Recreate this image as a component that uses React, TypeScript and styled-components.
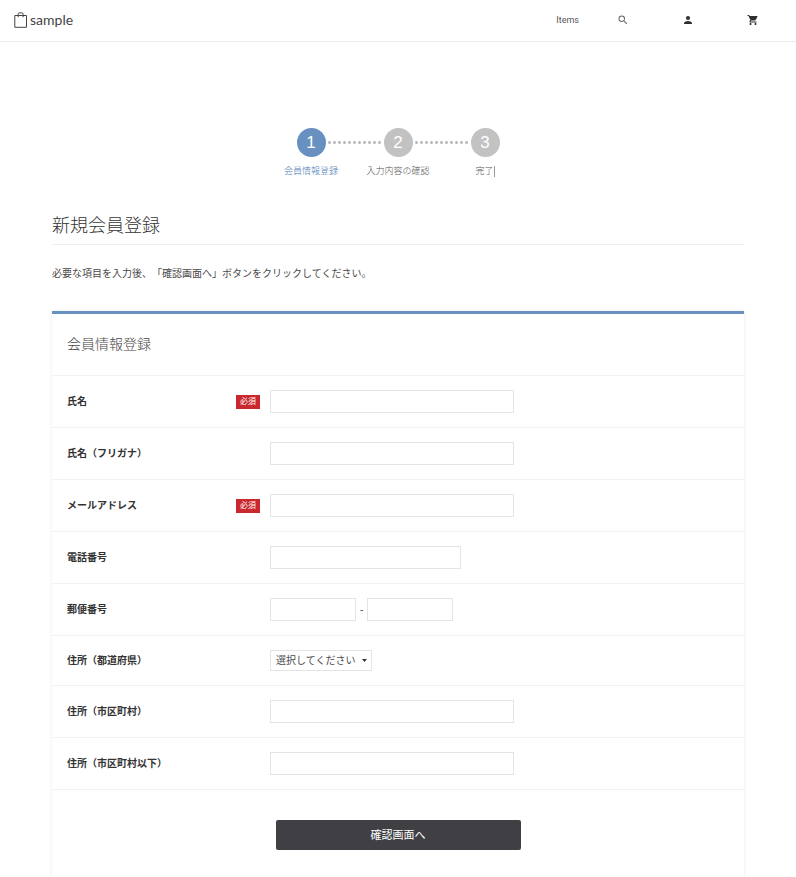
import React from "react";
import styled, { createGlobalStyle } from "styled-components";
import { MdPerson, MdSearch, MdShoppingCart } from "react-icons/md";

const GlobalStyle = createGlobalStyle`
  *, *::before, *::after { box-sizing: border-box; }
  body {
    margin: 0;
    background: #fff;
    color: #4a4a4a;
    font-family: "Liberation Sans", "Noto Sans CJK JP", sans-serif;
    font-size: 10px;
    line-height: 16px;
    text-spacing-trim: space-all;
  }
  #root { overflow: hidden; }
  button, input, select { font: inherit; color: inherit; }
`;

const Header = styled.header`
  display: flex;
  justify-content: space-between;
  align-items: center;
  height: 42px;
  padding: 0 35px 2px 14px;
  border-bottom: 1px solid #ebebeb;
`;

const Logo = styled.a`
  display: flex;
  align-items: center;
  gap: 2px;
  color: #444;
  font-family: Lato, sans-serif;
  font-size: 14px;
  text-decoration: none;
`;

const Nav = styled.nav`
  display: flex;
  align-items: center;
`;

const NavText = styled.a`
  margin-right: 36px;
  color: #555;
  font-family: Roboto, sans-serif;
  font-size: 9px;
  text-decoration: none;
`;

const NavIcon = styled.button<{ $muted?: boolean }>`
  display: flex;
  justify-content: center;
  width: 16px;
  margin-right: 49px;
  padding: 0;
  border: 0;
  background: none;
  color: ${(p) => (p.$muted ? "#666" : "#2f2f33")};
  font-size: 12px;
  cursor: pointer;

  &:last-child { margin-right: 0; }
`;

const Main = styled.main`
  padding: 86px 52px 0;
`;

const Steps = styled.ol`
  display: flex;
  justify-content: center;
  margin: 0;
  padding: 0;
  list-style: none;
`;

const Step = styled.li<{ $active?: boolean }>`
  position: relative;
  display: flex;
  flex-direction: column;
  align-items: center;
  gap: 9px;
  width: 87px;
  color: ${(p) => (p.$active ? "#4d7bb5" : "#555")};
  font-size: 9px;
  font-weight: 300;

  &:not(:last-child)::after {
    content: "";
    position: absolute;
    top: 13px;
    left: 59px;
    width: 55px;
    height: 3px;
    background: radial-gradient(circle, #bdbdbd 1px, transparent 2px) 0 0 / 5px 3px;
  }
`;

const StepNumber = styled.span<{ $active?: boolean }>`
  display: grid;
  place-items: center;
  width: 29px;
  height: 29px;
  border-radius: 50%;
  background: ${(p) => (p.$active ? "#6890c0" : "#c2c2c2")};
  color: #fff;
  font-size: 17px;
  font-weight: 400;
`;

const StepLabel = styled.span<{ $caret?: boolean }>`
  line-height: 11px;
  border-right: ${(p) => (p.$caret ? "1px solid #999" : "0")};
`;

const PageTitle = styled.h1`
  margin: 36px 0 0;
  padding-bottom: 5px;
  border-bottom: 1px solid #efefef;
  color: #333;
  font-size: 18px;
  font-weight: 300;
  line-height: 26px;
`;

const Lead = styled.p`
  margin: 21px 0 29px;
`;

const Card = styled.form`
  border-top: 3px solid #6890c0;
  box-shadow: 0 0 3px rgba(0, 0, 0, 0.1);
  padding-bottom: 60px;
`;

const CardTitle = styled.h2`
  margin: 0;
  padding: 18px 15px 19px;
  border-bottom: 1px solid #f1f1f1;
  color: #444;
  font-size: 14px;
  font-weight: 300;
  line-height: 24px;
`;

const Row = styled.div`
  display: grid;
  grid-template-columns: 218px 1fr;
  border-bottom: 1px solid #f1f1f1;
  padding: 14px 0;
`;

const LabelCell = styled.div`
  display: flex;
  align-items: center;
  justify-content: space-between;
  padding: 0 10px 0 15px;
`;

const Label = styled.label`
  color: #333;
  font-weight: 700;
`;

const Required = styled.span`
  padding: 0 4px;
  background: #c9282d;
  color: #fff;
  font-size: 8px;
  line-height: 14px;
`;

const Field = styled.div`
  display: flex;
  align-items: center;
  gap: 4px;
`;

const widths = { long: "244px", medium: "191px", short: "86px" };

const TextInput = styled.input<{ $size: keyof typeof widths }>`
  width: ${(p) => widths[p.$size]};
  height: 23px;
  padding: 0 6px;
  border: 1px solid #e4e4e4;
  border-radius: 0;
  background: #fff;
`;

const SelectWrap = styled.div`
  display: grid;
  align-items: center;
  width: 102px;

  & > * { grid-area: 1 / 1; }
  & > svg { justify-self: end; margin-right: 5px; pointer-events: none; }
`;

const Select = styled.select`
  width: 100%;
  height: 21px;
  padding: 0 5px;
  border: 1px solid #e4e4e4;
  border-radius: 0;
  background: #fff;
  appearance: none;
`;

const Submit = styled.button`
  display: block;
  width: 245px;
  height: 30px;
  margin: 30px auto 0;
  padding: 0;
  border: 0;
  border-radius: 2px;
  background: #403f44;
  color: #fff;
  font-size: 11px;
  cursor: pointer;
`;

const steps = ["会員情報登録", "入力内容の確認", "完了"];

type FormField = {
  id: string;
  label: string;
  size?: keyof typeof widths;
  type?: string;
  required?: boolean;
  kind?: "postal" | "select";
};

const fields: FormField[] = [
  { id: "name", label: "氏名", size: "long", required: true },
  { id: "kana", label: "氏名（フリガナ）", size: "long" },
  { id: "email", label: "メールアドレス", size: "long", type: "email", required: true },
  { id: "tel", label: "電話番号", size: "medium", type: "tel" },
  { id: "postal", label: "郵便番号", kind: "postal" },
  { id: "prefecture", label: "住所（都道府県）", kind: "select" },
  { id: "city", label: "住所（市区町村）", size: "long" },
  { id: "street", label: "住所（市区町村以下）", size: "long" },
];

const BagIcon = () => (
  <svg width="14" height="16" viewBox="0 0 14 16" fill="none" stroke="#444" aria-hidden="true">
    <path d="M.8 3.5h11.7v11.8H.8z" />
    <path d="M4.2 5.2V2.3Q4.2.8 5.7.8h1.9q1.5 0 1.5 1.5v2.9" />
  </svg>
);

const Control = ({ field }: { field: FormField }) => {
  if (field.kind === "postal") {
    return (
      <>
        <TextInput id={field.id} $size="short" inputMode="numeric" />
        <span>-</span>
        <TextInput aria-label="郵便番号" $size="short" inputMode="numeric" />
      </>
    );
  }
  if (field.kind === "select") {
    return (
      <SelectWrap>
        <Select id={field.id}>
          <option>選択してください</option>
        </Select>
        <svg width="5" height="3" viewBox="0 0 5 3" aria-hidden="true">
          <path d="M0 0h5L2.5 3z" fill="#333" />
        </svg>
      </SelectWrap>
    );
  }
  return (
    <TextInput
      id={field.id}
      type={field.type ?? "text"}
      $size={field.size ?? "long"}
      required={field.required}
    />
  );
};

export default function App() {
  return (
    <>
      <GlobalStyle />
      <Header>
        <Logo href="#">
          <BagIcon />
          sample
        </Logo>
        <Nav>
          <NavText href="#">Items</NavText>
          <NavIcon type="button" aria-label="検索" $muted><MdSearch /></NavIcon>
          <NavIcon type="button" aria-label="アカウント"><MdPerson /></NavIcon>
          <NavIcon type="button" aria-label="カート"><MdShoppingCart /></NavIcon>
        </Nav>
      </Header>
      <Main>
        <Steps>
          {steps.map((label, i) => (
            <Step key={label} $active={i === 0}>
              <StepNumber $active={i === 0}>{i + 1}</StepNumber>
              <StepLabel $caret={i === steps.length - 1}>{label}</StepLabel>
            </Step>
          ))}
        </Steps>
        <PageTitle>新規会員登録</PageTitle>
        <Lead>必要な項目を入力後、「確認画面へ」ボタンをクリックしてください。</Lead>
        <Card onSubmit={(e) => e.preventDefault()}>
          <CardTitle>会員情報登録</CardTitle>
          {fields.map((field) => (
            <Row key={field.id}>
              <LabelCell>
                <Label htmlFor={field.id}>{field.label}</Label>
                {field.required && <Required>必須</Required>}
              </LabelCell>
              <Field>
                <Control field={field} />
              </Field>
            </Row>
          ))}
          <Submit type="submit">確認画面へ</Submit>
        </Card>
      </Main>
    </>
  );
}
